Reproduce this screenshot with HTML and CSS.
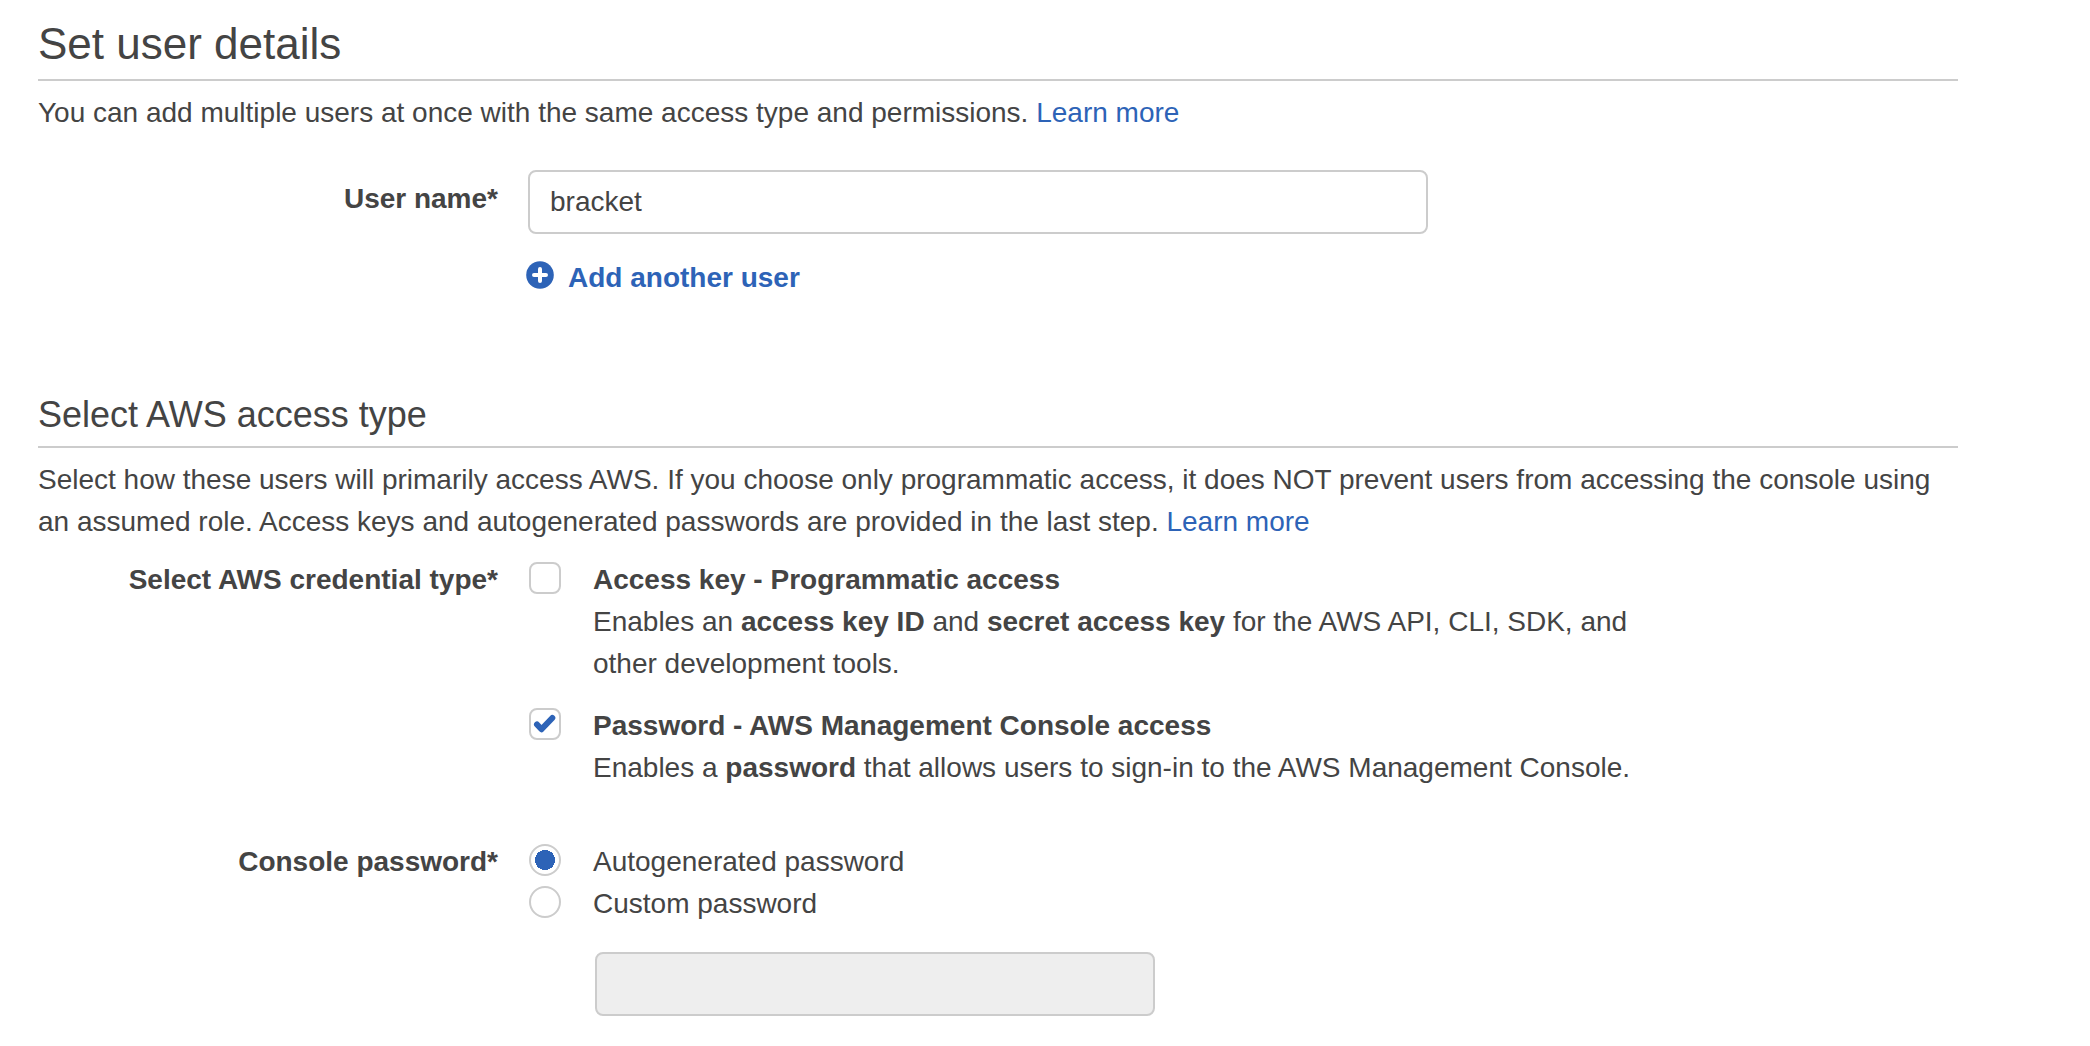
FILE: index.html
```html
<!DOCTYPE html>
<html lang="en">
<head>
<meta charset="utf-8">
<meta name="viewport" content="width=device-width, initial-scale=1">
<title>Add user</title>
<link rel="stylesheet" href="styles.css">
</head>
<body>
<main class="page">
  <form>
    <section class="section">
      <h1 class="title">Set user details</h1>
      <p class="intro">You can add multiple users at once with the same access type and permissions. <a href="#">Learn more</a></p>
      <div class="row row-user">
        <label class="row-label row-label-input" for="user-name">User name*</label>
        <div class="row-body">
          <input class="text-input" id="user-name" type="text" value="bracket">
          <button class="add-button" type="button">
            <svg class="add-icon" viewBox="0 0 28 28" aria-hidden="true">
              <circle cx="14" cy="14" r="13.800" fill="currentColor"/>
              <path d="M14 8v12M8 14h12" fill="none" stroke="#fff" stroke-width="4" stroke-linecap="round"/>
            </svg>
            Add another user
          </button>
        </div>
      </div>
    </section>

    <section class="section">
      <h2 class="subtitle">Select AWS access type</h2>
      <p class="intro">Select how these users will primarily access AWS. If you choose only programmatic access, it does NOT prevent users from accessing the console using an assumed role. Access keys and autogenerated passwords are provided in the last step. <a href="#">Learn more</a></p>
      <div class="row row-credential" role="group" aria-labelledby="credential-label">
        <span class="row-label" id="credential-label">Select AWS credential type*</span>
        <div class="row-body options">
          <div class="option">
            <input class="choice check" id="access-key" type="checkbox" aria-describedby="access-key-help">
            <div class="option-text">
              <label class="option-name" for="access-key">Access key - Programmatic access</label>
              <p class="option-help" id="access-key-help">Enables an <strong>access key ID</strong> and <strong>secret access key</strong> for the AWS API, CLI, SDK, and other development tools.</p>
            </div>
          </div>
          <div class="option">
            <input class="choice check" id="password-access" type="checkbox" aria-describedby="password-access-help" checked>
            <div class="option-text">
              <label class="option-name" for="password-access">Password - AWS Management Console access</label>
              <p class="option-help" id="password-access-help">Enables a <strong>password</strong> that allows users to sign-in to the AWS Management Console.</p>
            </div>
          </div>
        </div>
      </div>
      <div class="row row-password" role="group" aria-labelledby="password-label">
        <span class="row-label" id="password-label">Console password*</span>
        <div class="row-body">
          <div class="option">
            <input class="choice radio" id="auto-password" type="radio" name="console-password" checked>
            <label class="option-text" for="auto-password">Autogenerated password</label>
          </div>
          <div class="option">
            <input class="choice radio" id="custom-password" type="radio" name="console-password">
            <label class="option-text" for="custom-password">Custom password</label>
          </div>
          <input class="text-input password-input" type="password" aria-label="Custom password" disabled>
        </div>
      </div>
    </section>
  </form>
</main>
</body>
</html>
```
FILE: styles.css
```css
* {
  box-sizing: border-box;
}

body {
  margin: 0;
  background: #fff;
  color: #444;
  font: 28px/42px "Liberation Sans", Arial, sans-serif;
}

a {
  color: #2d63b7;
  text-decoration: none;
}

.page {
  padding: 18px 132px 30px 38px;
}

.title,
.subtitle {
  margin: 0 0 11px;
  border-bottom: 2px solid #ccc;
  font-weight: 400;
}

.title {
  padding-bottom: 9px;
  font-size: 44px;
  line-height: 52px;
}

.subtitle {
  padding-bottom: 10px;
  font-size: 36px;
  line-height: 42px;
}

.intro {
  margin: 0;
}

.row {
  display: grid;
  grid-template-columns: 460px minmax(0, 1fr);
  column-gap: 30px;
}

.row-user {
  margin: 36px 0 95px;
}

.row-credential {
  margin-top: 16px;
}

.row-password {
  margin-top: 52px;
}

.row-label {
  font-weight: 700;
  text-align: right;
}

.row-label-input {
  padding-top: 8px;
}

.text-input {
  display: block;
  width: 100%;
  max-width: 900px;
  height: 64px;
  padding: 0 20px;
  border: 2px solid #ccc;
  border-radius: 8px;
  background: #fff;
  color: inherit;
  font: inherit;
}

.text-input:disabled {
  background: #eee;
}

.password-input {
  max-width: 560px;
  margin: 27px 0 0 67px;
}

.add-button {
  display: flex;
  align-items: flex-start;
  gap: 14px;
  margin-top: 23px;
  padding: 0;
  border: 0;
  background: none;
  color: #2d63b7;
  font: inherit;
  font-weight: 700;
  cursor: pointer;
}

.add-icon {
  width: 28px;
  height: 28px;
  margin: 4px 0 0 -2px;
}

.options {
  display: grid;
  row-gap: 20px;
}

.option {
  display: flex;
  align-items: flex-start;
  gap: 32px;
}

.option-text {
  max-width: 1060px;
}

.option-name {
  display: block;
  font-weight: 700;
}

.option-help {
  margin: 0;
}

.choice {
  flex: none;
  width: 32px;
  height: 32px;
  margin: 3px 0 0 1px;
  border: 2px solid #ccc;
  background: #fff center / 28px 28px no-repeat;
  appearance: none;
}

.check {
  border-radius: 8px;
}

.check:checked {
  background-image: url("data:image/svg+xml,%3Csvg xmlns='http://www.w3.org/2000/svg' viewBox='0 0 28 28'%3E%3Cpath d='M6 14.500l4.500 4.800L21.300 8' fill='none' stroke='%232d63b7' stroke-width='6' stroke-linecap='round' stroke-linejoin='round'/%3E%3C/svg%3E");
}

.radio {
  border-radius: 50%;
}

.radio:checked {
  background-image: radial-gradient(circle, #2d63b7 0 9px, #2d63b7 10px, transparent 10px);
}
```
